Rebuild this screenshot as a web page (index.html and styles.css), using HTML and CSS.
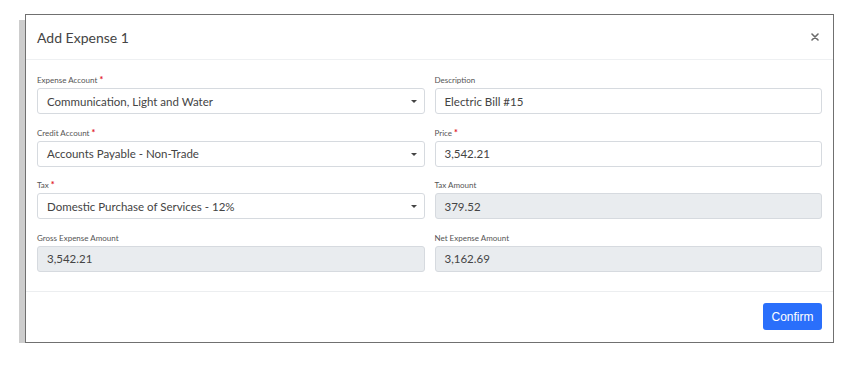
FILE: index.html
```html
<!DOCTYPE html>
<html>
<head>
<meta charset="utf-8">
<link rel="stylesheet" href="styles.css">
</head>
<body>
<div class="stage">
  <div class="modal">
    <div class="modal-header">
      <h1 class="modal-title">Add Expense 1</h1>
      <button class="close" aria-label="Close">
        <svg width="8" height="8" viewBox="0 0 8 8"><path d="M1 1L7 7M7 1L1 7" stroke="#6b6b6b" stroke-width="1.6" stroke-linecap="round"/></svg>
      </button>
    </div>
    <div class="modal-body">
      <div class="field">
        <label class="label">Expense Account <span class="req">*</span></label>
        <div class="control select">Communication, Light and Water<span class="caret"></span></div>
      </div>
      <div class="field">
        <label class="label">Description</label>
        <div class="control">Electric Bill #15</div>
      </div>
      <div class="field">
        <label class="label">Credit Account <span class="req">*</span></label>
        <div class="control select">Accounts Payable - Non-Trade<span class="caret"></span></div>
      </div>
      <div class="field">
        <label class="label">Price <span class="req">*</span></label>
        <div class="control">3,542.21</div>
      </div>
      <div class="field">
        <label class="label">Tax <span class="req">*</span></label>
        <div class="control select">Domestic Purchase of Services - 12%<span class="caret"></span></div>
      </div>
      <div class="field">
        <label class="label">Tax Amount</label>
        <div class="control readonly">379.52</div>
      </div>
      <div class="field">
        <label class="label">Gross Expense Amount</label>
        <div class="control readonly">3,542.21</div>
      </div>
      <div class="field">
        <label class="label">Net Expense Amount</label>
        <div class="control readonly">3,162.69</div>
      </div>
    </div>
    <div class="modal-footer">
      <button class="btn-primary">Confirm</button>
    </div>
  </div>
</div>
</body>
</html>
```
FILE: styles.css
```css
* { box-sizing: border-box; }
html, body { margin: 0; padding: 0; background: #fff; }
body { font-family: Lato, "Noto Sans", sans-serif; color: #444; }

.stage { padding: 14px 0 0 25px; }

.modal {
  width: 809px;
  height: 329px;
  border: 1px solid #707070;
  background: #fff;
  box-shadow: -6px 6px 0 #cdcdcd;
  display: flex;
  flex-direction: column;
}

.modal-header {
  height: 45px;
  border-bottom: 1px solid #eef0f2;
  display: flex;
  align-items: center;
  justify-content: space-between;
  padding: 0 11px 0 11px;
}
.modal-title {
  margin: 0;
  font-size: 14px;
  font-weight: 400;
  color: #444;
}
.close {
  border: 0;
  background: none;
  padding: 0;
  width: 14px;
  height: 14px;
  display: flex;
  align-items: center;
  justify-content: center;
}

.modal-body {
  padding: 15px 11px 19px;
  display: grid;
  grid-template-columns: 1fr 1fr;
  column-gap: 10px;
  row-gap: 13.67px;
  border-bottom: 1px solid #eceef0;
}
.field { display: flex; flex-direction: column; }
.label {
  display: block;
  height: 11px;
  font-size: 8px;
  line-height: 11px;
  color: #555;
  margin-bottom: 2px;
  overflow: visible;
}
.req { color: #e0141e; font-weight: 700; font-size: 9px; line-height: 0; }

.control {
  position: relative;
  height: 26px;
  border: 1px solid #d6dadf;
  border-radius: 3px;
  padding: 0 9px;
  display: flex;
  align-items: center;
  font-size: 11.5px;
  color: #444;
  background: #fff;
}
.control.readonly { background: #e9ecef; }
.caret {
  position: absolute;
  right: 7px;
  top: 11px;
  width: 0;
  height: 0;
  border-left: 3px solid transparent;
  border-right: 3px solid transparent;
  border-top: 3px solid #444;
}

.modal-footer {
  flex: 1;
  display: flex;
  align-items: center;
  justify-content: flex-end;
  padding: 0 11px;
}
.btn-primary {
  height: 27px;
  width: 59px;
  border: 0;
  border-radius: 3px;
  background: #2a6ffb;
  color: #fff;
  font-family: "Liberation Sans", sans-serif;
  font-size: 12px;
  padding: 0;
}
```
